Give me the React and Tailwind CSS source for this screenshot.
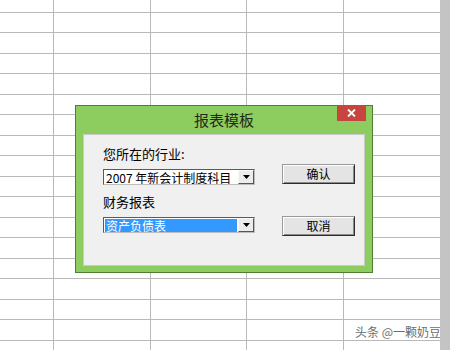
import React from "react";

const rowHeights = [
  13, 20, 21, 20, 21, 20, 21, 20, 21, 20, 21, 20, 21, 20, 21, 20, 21, 10,
];

function SheetRow({ h }) {
  const hClass = h === 13 ? "h-[13px]" : h === 20 ? "h-[20px]" : h === 21 ? "h-[21px]" : "h-[10px]";
  const line = "border-r border-[#b9b9b9]";
  return (
    <div className={`flex shrink-0 border-b border-[#b9b9b9] ${hClass}`}>
      <div className={`w-[54px] ${line}`} />
      <div className={`w-[97px] ${line}`} />
      <div className={`w-[96px] ${line}`} />
      <div className={`w-[97px] ${line}`} />
      <div className="flex-1" />
    </div>
  );
}

function Combo({ text, selected }) {
  return (
    <div className="flex h-[16px] w-[152px] border border-t-[#5a5a5a] border-l-[#5a5a5a] border-b-[#bdbdbd] border-r-[#bdbdbd] bg-white">
      <div className="flex-1 flex items-center pl-[1px] pr-[1px]">
        <div
          className={
            selected
              ? "w-full h-[13px] bg-[#3399ff] text-white text-[12px] leading-[13px] pl-[1px]"
              : "w-full h-[13px] text-black text-[12px] leading-[13px] pl-[1px]"
          }
        >
          {text}
        </div>
      </div>
      <div className="w-[16px] h-full bg-[#ececec] border border-t-[#f8f8f8] border-l-[#f8f8f8] border-b-[#555] border-r-[#555] flex items-center justify-center">
        <svg width="7" height="4" viewBox="0 0 7 4">
          <path d="M0 0h7L3.5 4z" fill="#000" />
        </svg>
      </div>
    </div>
  );
}

function Btn({ label }) {
  return (
    <div className="w-[73px] h-[20px] bg-[#e4e4e4] border border-t-[#9a9a9a] border-l-[#9a9a9a] border-b-[#2e2e2e] border-r-[#2e2e2e] shadow-[inset_1px_1px_0_#ffffff,inset_-1px_-1px_0_#8a8a8a] flex items-center justify-center text-[12px] text-black">
      {label}
    </div>
  );
}

export default function App() {
  return (
    <div
      className="relative w-[450px] h-[350px] overflow-hidden bg-white flex"
      style={{ fontFamily: '"Noto Sans CJK SC", "Noto Sans", sans-serif' }}
    >
      {/* Tabelle */}
      <div className="w-[440px] flex flex-col">
        {rowHeights.map((h, i) => (
          <SheetRow key={i} h={h} />
        ))}
      </div>
      {/* Scrollbar */}
      <div className="w-[10px] bg-[#c4c4c4]" />

      {/* Dialog */}
      <div className="absolute left-[75px] top-[105px] w-[298px] h-[168px] bg-[#8dcd5f] border border-[#4e7d34] flex flex-col px-[7px] pb-[6px]">
        <div className="relative h-[28px] flex items-center justify-center text-[15px] text-[#1e2a18] shrink-0">
          报表模板
          <div className="absolute right-[-1px] top-[-1px] w-[29px] h-[16px] bg-[#c8453f] flex items-center justify-center">
            <svg width="9" height="8" viewBox="0 0 9 8">
              <path d="M1 0.5L8 7.5M8 0.5L1 7.5" stroke="#fff" strokeWidth="1.8" />
            </svg>
          </div>
        </div>
        <div className="flex-1 bg-[#f0f0f0] border border-[#c9c9c9] flex pl-[19px]">
          <div className="flex flex-col w-[152px] pt-[11px]">
            <div className="h-[16px] text-[13px] leading-[16px] text-black">您所在的行业:</div>
            <div className="mt-[7px]">
              <Combo text="2007 年新会计制度科目" />
            </div>
            <div className="mt-[9px] h-[16px] text-[13px] leading-[16px] text-black">财务报表</div>
            <div className="mt-[7px]">
              <Combo text="资产负债表" selected />
            </div>
          </div>
          <div className="flex flex-col ml-[27px] pt-[29px] gap-[32px]">
            <Btn label="确认" />
            <Btn label="取消" />
          </div>
        </div>
      </div>

      {/* Wasserzeichen */}
      <div className="absolute left-[355px] top-[323px] text-[12px] text-[#6e6e6e] [text-shadow:0_0_2px_#ffffff]">
        头条 @一颗奶豆
      </div>
    </div>
  );
}
